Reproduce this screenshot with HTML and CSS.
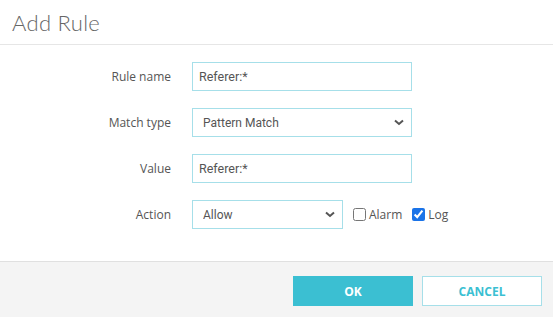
FILE: index.html
```html
<!DOCTYPE html>
<html lang="en">
<head>
  <meta charset="UTF-8" />
  <meta name="viewport" content="width=device-width, initial-scale=1.0"/>
  <title>Add Rule</title>
  <link rel="stylesheet" href="styles.css">
</head>
<body>

  <div class="dialog">
    <div class="dialog-header">
      <h1 class="dialog-title">Add Rule</h1>
    </div>

    <form class="rule-form">
      <label class="field-label" for="rule-name">Rule name</label>
      <div class="field">
        <input type="text" class="text-input" id="rule-name" value="Referer:*" />
      </div>

      <label class="field-label" for="match-type">Match type</label>
      <div class="field">
        <select class="select-input wide" id="match-type">
          <option>Pattern Match</option>
          <option>Exact Match</option>
        </select>
      </div>

      <label class="field-label" for="rule-value">Value</label>
      <div class="field">
        <input type="text" class="text-input" id="rule-value" value="Referer:*" />
      </div>

      <label class="field-label" for="action">Action</label>
      <div class="field action-row">
        <select class="select-input narrow" id="action">
          <option>Allow</option>
          <option>Block</option>
        </select>
        <label class="check"><input type="checkbox" /> Alarm</label>
        <label class="check"><input type="checkbox" checked /> Log</label>
      </div>
    </form>

    <div class="dialog-footer">
      <button class="btn btn-primary">OK</button>
      <button class="btn btn-outline">Cancel</button>
    </div>
  </div>

</body>
</html>
```

FILE: styles.css
```css
body {
  margin: 0;
  font-family: "Open Sans", Arial, sans-serif;
  background: #fff;
  color: #555;
}
.dialog {
  width: 553px;
  height: 317px;
  display: flex;
  flex-direction: column;
}
.dialog-header {
  height: 45px;
  border-bottom: 1px solid #e6e6e6;
  box-sizing: border-box;
  padding-left: 12px;
  display: flex;
  align-items: center;
}
.dialog-title {
  margin: 0;
  font-family: Lato, "Open Sans", sans-serif;
  font-weight: 300;
  font-size: 22px;
  color: #666;
  letter-spacing: 0.3px;
}
.rule-form {
  display: grid;
  grid-template-columns: 171px auto;
  column-gap: 21px;
  row-gap: 17px;
  padding: 17px 0 32px;
}
.field-label {
  text-align: right;
  font-size: 12px;
  color: #555;
  align-self: center;
}
.field {
  display: flex;
  align-items: center;
}
.text-input,
.select-input {
  height: 29px;
  box-sizing: border-box;
  border: 1px solid #a6dfe9;
  border-radius: 0;
  background: #fff;
  font-family: Roboto, Arial, sans-serif;
  font-size: 12px;
  color: #555;
  outline: none;
}
.text-input {
  width: 220px;
  padding: 0 6px;
  font-size: 12.5px;
}
.select-input {
  appearance: none;
  -webkit-appearance: none;
  padding: 0 24px 0 10px;
  background-image: url("data:image/svg+xml;utf8,<svg xmlns='http://www.w3.org/2000/svg' width='10' height='7' viewBox='0 0 10 7'><path d='M1 1.5l4 3.5 4-3.5' fill='none' stroke='%23555' stroke-width='2'/></svg>");
  background-repeat: no-repeat;
  background-position: right 7px center;
}
.select-input.wide {
  width: 220px;
}
.select-input.narrow {
  width: 151px;
}
.action-row {
  gap: 10px;
}
.check {
  display: flex;
  align-items: center;
  gap: 3px;
  font-size: 12px;
  color: #555;
}
.check input {
  margin: 0;
  width: 13px;
  height: 13px;
  accent-color: #1a73e8;
}
.dialog-footer {
  flex: 1;
  border-top: 1px solid #e0e0e0;
  background-color: #f4f4f4;
  display: flex;
  justify-content: flex-end;
  align-items: flex-start;
  gap: 9px;
  padding: 14px 11px 0 0;
}
.btn {
  width: 120px;
  height: 30px;
  font-family: "Open Sans", Arial, sans-serif;
  font-weight: 700;
  font-size: 12px;
  text-transform: uppercase;
  cursor: pointer;
  border-radius: 0;
}
.btn-primary {
  background: #3bbfd2;
  border: 1px solid #3bbfd2;
  color: #fff;
}
.btn-outline {
  background: #fff;
  border: 1px solid #a6dfe9;
  color: #3bbfd2;
}
```
